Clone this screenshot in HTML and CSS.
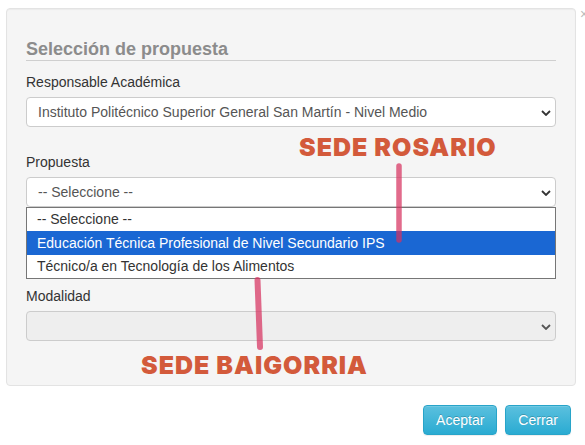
FILE: index.html
```html
<!DOCTYPE html>
<html lang="es">
<head>
<meta charset="utf-8">
<title>Selección de propuesta</title>
<link rel="stylesheet" href="styles.css">
</head>
<body>
<div class="modal">
  <span class="close">×</span>
  <div class="well">
    <div class="legend">Selección de propuesta</div>
    <div class="group">
      <div class="label">Responsable Académica</div>
      <div class="control">
        <span class="value">Instituto Politécnico Superior General San Martín - Nivel Medio</span>
        <svg class="chev" width="10" height="6" viewBox="0 0 10 6"><path d="M1 1 L5 5 L9 1" fill="none" stroke="#333" stroke-width="1.8"/></svg>
      </div>
    </div>
    <div class="group group-open">
      <div class="label">Propuesta</div>
      <div class="control">
        <span class="value">-- Seleccione --</span>
        <svg class="chev" width="10" height="6" viewBox="0 0 10 6"><path d="M1 1 L5 5 L9 1" fill="none" stroke="#333" stroke-width="1.8"/></svg>
      </div>
      <div class="dropdown">
        <div class="opt">-- Seleccione --</div>
        <div class="opt opt-sel">Educación Técnica Profesional de Nivel Secundario IPS</div>
        <div class="opt">Técnico/a en Tecnología de los Alimentos</div>
      </div>
    </div>
    <div class="group group-last">
      <div class="label">Modalidad</div>
      <div class="control control-disabled">
        <span class="value"></span>
        <svg class="chev" width="10" height="6" viewBox="0 0 10 6"><path d="M1 1 L5 5 L9 1" fill="none" stroke="#555" stroke-width="1.8"/></svg>
      </div>
    </div>
  </div>
  <div class="footer">
    <button class="btn">Aceptar</button>
    <button class="btn">Cerrar</button>
  </div>
</div>

<svg class="marks" width="585" height="445" viewBox="0 0 585 445">
  <line x1="399" y1="166" x2="399" y2="240" stroke="rgba(215,50,95,0.72)" stroke-width="5.5" stroke-linecap="round"/>
  <line x1="257.5" y1="280" x2="260" y2="347" stroke="rgba(215,50,95,0.72)" stroke-width="6" stroke-linecap="round"/>
</svg>
<div class="note note-rosario">SEDE ROSARIO</div>
<div class="note note-baigorria">SEDE BAIGORRIA</div>
</body>
</html>
```
FILE: styles.css
```css
* { box-sizing: border-box; }

body {
  margin: 0;
  background: #fff;
  font-family: "Liberation Sans", Arial, sans-serif;
  font-size: 14px;
  color: #333;
  width: 585px;
  height: 445px;
  overflow: hidden;
  position: relative;
}

.modal {
  padding: 8px 9px 0 6px;
}

.close {
  position: absolute;
  left: 580px;
  top: 6px;
  font-size: 14px;
  color: #bbb;
}

.well {
  background: #f5f5f5;
  border: 1px solid #e3e3e3;
  border-radius: 4px;
  padding: 19px 19px 44px;
  box-shadow: inset 0 1px 1px rgba(0,0,0,0.04);
}

.legend {
  padding: 11px 0 1px;
  font-size: 18px;
  line-height: 20px;
  font-weight: bold;
  color: #8c8c8c;
  border-bottom: 1px solid #cfcfcf;
  margin-bottom: 11px;
}

.group {
  margin-bottom: 25px;
  position: relative;
}

.group-open {
  margin-bottom: 79px;
}

.group-last {
  margin-bottom: 0;
}

.label {
  line-height: 20px;
  margin-bottom: 5px;
  color: #333;
}

.control {
  height: 30px;
  background: #fff;
  border: 1px solid #ccc;
  border-radius: 4px;
  display: flex;
  align-items: center;
  padding: 0 4px 0 11px;
  color: #555;
}

.control .value {
  flex: 1;
  white-space: nowrap;
  overflow: hidden;
}

.chev {
  flex: none;
  margin-top: 1px;
}

.control-disabled {
  background: #eee;
}

.dropdown {
  position: absolute;
  left: 0;
  right: 0;
  top: 55px;
  background: #fff;
  border: 1px solid #767676;
  color: #333;
  z-index: 2;
}

.opt {
  height: 23px;
  line-height: 23px;
  padding-left: 10px;
  white-space: nowrap;
}

.opt-sel {
  height: 24px;
  line-height: 24px;
  background: #1a67d3;
  color: #fff;
}

.footer {
  display: flex;
  justify-content: flex-end;
  gap: 8px;
  margin-top: 19px;
  padding-right: 5px;
}

.btn {
  font-family: "Liberation Sans", Arial, sans-serif;
  font-size: 14px;
  line-height: 18px;
  padding: 5px 12px;
  color: #fff;
  background: linear-gradient(to bottom, #5bc0de 0%, #2aabd2 100%);
  border: 1px solid #28a4c9;
  border-radius: 4px;
  text-shadow: 0 -1px 0 rgba(0,0,0,0.2);
  box-shadow: inset 0 1px 0 rgba(255,255,255,0.15), 0 1px 1px rgba(0,0,0,0.075);
}

.marks {
  position: absolute;
  left: 0;
  top: 0;
  pointer-events: none;
  z-index: 3;
}

.note {
  position: absolute;
  font-family: Inter, "Open Sans", sans-serif;
  font-weight: 900;
  font-size: 25px;
  line-height: 25px;
  color: #d35a3b;
  white-space: nowrap;
  letter-spacing: 1px;
  z-index: 4;
}

.note-rosario {
  left: 299px;
  top: 135px;
}

.note-baigorria {
  left: 141px;
  top: 353px;
}
```
